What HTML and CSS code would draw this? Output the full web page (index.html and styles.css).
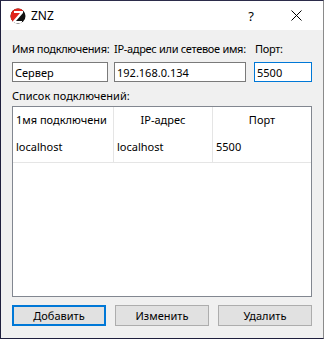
FILE: index.html
```html
<!DOCTYPE html>
<html lang="ru">
<head>
    <meta charset="UTF-8">
    <title>ZNZ</title>
    <link rel="stylesheet" href="styles.css">
</head>
<body>
    <div class="window">
        <div class="titlebar">
            <svg class="logo" width="16" height="16" viewBox="0 0 16 16">
                <defs>
                    <clipPath id="round"><circle cx="8" cy="8" r="7.5"/></clipPath>
                </defs>
                <g clip-path="url(#round)">
                    <rect width="16" height="16" fill="#111"/>
                    <polygon points="0,0 13,0 13,3 3,14 0,14" fill="#e2231a"/>
                    <polygon points="4,3 13,3 13,5 6,13 12,13 12,15 3,15 3,13 10,5 4,5" fill="#fff"/>
                </g>
            </svg>
            <span class="title">ZNZ</span>
            <span class="help">?</span>
            <span class="close">
                <svg width="11" height="11" viewBox="0 0 11 11">
                    <path d="M0.5 0.5 L10.5 10.5 M10.5 0.5 L0.5 10.5" stroke="#000" stroke-width="1" fill="none"/>
                </svg>
            </span>
        </div>

        <div class="content">
            <div class="fields">
                <div class="field field-name">
                    <label class="label">Имя подключения:</label>
                    <input class="input" type="text" value="Сервер">
                </div>
                <div class="field field-host">
                    <label class="label">IP-адрес или сетевое имя:</label>
                    <input class="input" type="text" value="192.168.0.134">
                </div>
                <div class="field field-port">
                    <label class="label">Порт:</label>
                    <input class="input input-focus" type="text" value="5500">
                </div>
            </div>

            <div class="list-label">Список подключений:</div>

            <div class="list">
                <table class="grid">
                    <thead>
                        <tr>
                            <th class="col-name"><div class="clip">1мя подключени</div></th>
                            <th class="col-host">IP-адрес</th>
                            <th class="col-port">Порт</th>
                        </tr>
                    </thead>
                    <tbody>
                        <tr>
                            <td>localhost</td>
                            <td>localhost</td>
                            <td>5500</td>
                        </tr>
                    </tbody>
                </table>
            </div>

            <div class="buttons">
                <button class="btn btn-default">Добавить</button>
                <button class="btn">Изменить</button>
                <button class="btn">Удалить</button>
            </div>
        </div>
    </div>
</body>
</html>
```

FILE: styles.css
```css
html, body {
    margin: 0;
    padding: 0;
}

body {
    font-family: 'Noto Sans', 'Liberation Sans', sans-serif;
    font-size: 11px;
    color: #000;
    background-color: #f0f0f0;
}

.window {
    width: 324px;
    height: 339px;
    box-sizing: border-box;
    background-color: #f0f0f0;
    border-top: 1px solid #2b2b4a;
    border-left: 1px solid #1f1f3d;
    border-bottom: 1px solid #1f1f3d;
    border-right: 1px solid #8a8a8a;
}

.titlebar {
    height: 29px;
    background-color: #fff;
    display: flex;
    align-items: center;
    padding-left: 9px;
}

.logo {
    margin-top: 1px;
}

.title {
    margin-left: 5px;
    font-size: 12px;
}

.help {
    margin-left: auto;
    font-size: 13px;
    margin-right: 37px;
}

.close {
    display: flex;
    margin-right: 21px;
}

.content {
    padding: 0 11px;
}

.fields {
    display: flex;
    margin-top: 11px;
}

.field {
    display: flex;
    flex-direction: column;
}

.field-name {
    width: 96px;
    margin-right: 6px;
}

.field-host {
    width: 132px;
    margin-right: 8px;
}

.field-port {
    width: 58px;
}

.label {
    line-height: 16px;
    white-space: nowrap;
    letter-spacing: -0.3px;
    margin-bottom: 5px;
}

.field-port .label {
    margin-left: 1px;
}

.input {
    height: 20px;
    box-sizing: border-box;
    border: 1px solid #7a7a7a;
    background-color: #fff;
    font-family: inherit;
    font-size: 11px;
    padding: 0 2px;
    margin: 0;
    outline: none;
}

.input-focus {
    border-color: #0078d7;
}

.list-label {
    line-height: 16px;
    margin-top: 6px;
}

.list {
    margin-top: 2px;
    height: 191px;
    box-sizing: border-box;
    border: 1px solid #828790;
    background-color: #fff;
}

.grid {
    width: 100%;
    border-collapse: collapse;
    table-layout: fixed;
}

.grid th {
    height: 24px;
    font-weight: normal;
    padding: 0;
    border-right: 1px solid #e5e5e5;
    text-align: center;
}

.grid th.col-name {
    width: 100px;
    text-align: left;
}

.grid th.col-host {
    width: 98px;
}

.grid th:last-child,
.grid td:last-child {
    border-right: none;
}

.clip {
    overflow: hidden;
    white-space: nowrap;
    padding-left: 3px;
}

.grid td {
    height: 31px;
    padding: 0 0 0 3px;
    border-right: 1px solid #e5e5e5;
    border-bottom: 1px solid #e5e5e5;
}

.buttons {
    display: flex;
    gap: 9px;
    margin-top: 8px;
}

.btn {
    width: 94px;
    height: 21px;
    box-sizing: border-box;
    background-color: #e1e1e1;
    border: 1px solid #adadad;
    font-family: inherit;
    font-size: 11px;
    color: #000;
    padding: 0;
}

.btn-default {
    border: 2px solid #0078d7;
}
```
